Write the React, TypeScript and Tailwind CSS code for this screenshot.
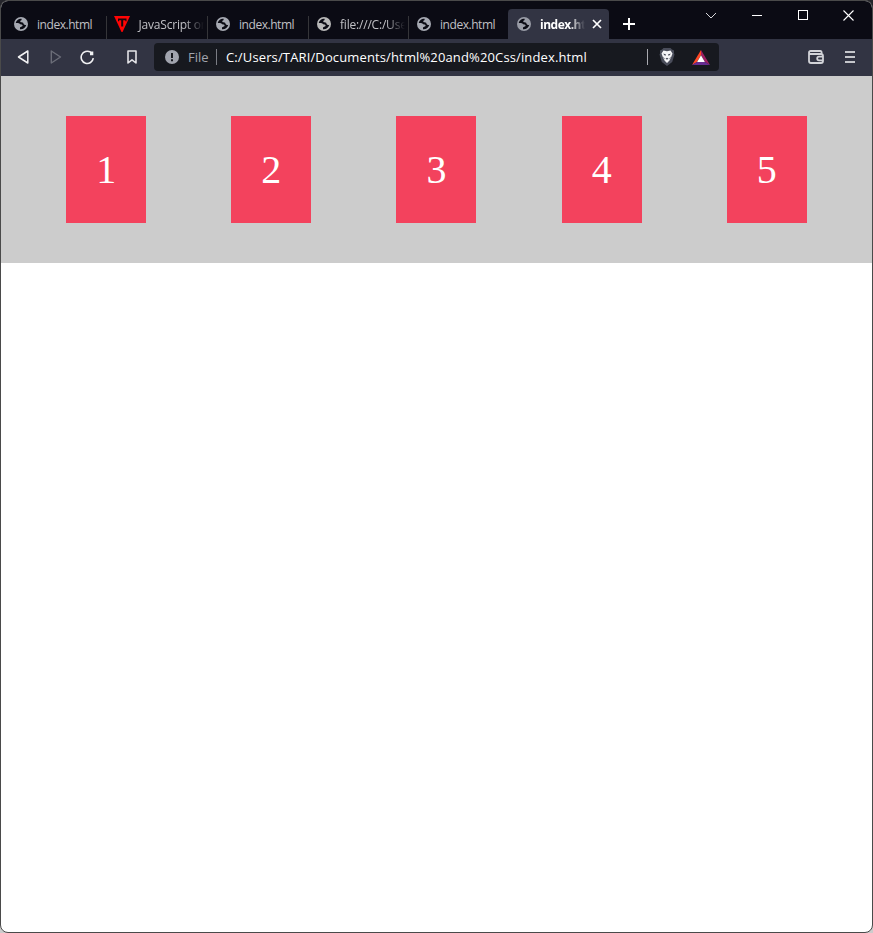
import React from "react";

const UI = "font-['Open_Sans','Noto_Sans',sans-serif]";

function Globe({ color }: { color: string }) {
  return (
    <svg className="size-[14px] shrink-0" viewBox="0 0 14 14">
      <circle cx="7" cy="7" r="7" fill={color} />
      <path d="M7.600 1.700C4.900 1.300 2.400 3 1.700 6H4c1.200 0 1.500.8 2.300 1.200.8.3 1.800 0 2.200.9.300 1-.4 1.500-1.300 1.600-.9.1-1.200.7-1.200 1.300v1.200c3.200.300 5.700-1.700 6.300-4.500-.900.500-2 .3-2.500-.500-.500-.900-.200-1.600-1.300-1.800-1.300-.200-2.300-.200-2.300-1.200 0-.900 1.400-.700 1.400-1.500Z" fill="#0b0b14" />
    </svg>
  );
}

function TLogo() {
  return (
    <svg className="h-4 w-4 shrink-0" viewBox="0 0 16 16">
      <path d="M0 0h16L8.500 16h-1Z" fill="#ff0505" />
      <path d="M4 2.500h8.500v2.800h-1.100V4.300H9.200v6.200H7.200V4.300H5.100v1H4Z" fill="#16080d" />
    </svg>
  );
}

const tabs = [
  { title: "index.html", w: "w-[101px]", globe: "#a6a9b2", track: "tracking-[-0.45px]" },
  { title: "JavaScript or", w: "w-[101px]", logo: true, fade: true, track: "tracking-[-0.2px]" },
  { title: "index.html", w: "w-[101px]", globe: "#a6a9b2", track: "tracking-[-0.45px]" },
  { title: "file:///C:/User", w: "w-[100px]", globe: "#b8b8b8", fade: true, track: "tracking-[-0.2px]" },
  { title: "index.html", w: "w-[99px]", globe: "#a6a9b2", track: "tracking-[-0.45px]" },
];

function TabStrip() {
  return (
    <div className="flex h-[38px] shrink-0 bg-[#0b0b14] pl-[5px]">
      <div className="flex h-[38px] items-end">
        {tabs.map((t, i) => (
          <div key={i} className={`flex h-[30px] items-center pl-2 ${t.w}`}>
            <div className="flex w-[20px] shrink-0">
              {t.logo ? <div className="-ml-px flex"><TLogo /></div> : <Globe color={t.globe!} />}
            </div>
            <div className={`min-w-0 flex-1 overflow-hidden whitespace-nowrap pl-[3px] pt-px text-[12px] leading-4 text-[#c0c0c5] ${t.track} ${t.fade ? "[mask-image:linear-gradient(to_right,black_72%,transparent_100%)]" : ""}`}>
              {t.logo ? <span className="ml-[0.5px]">{t.title}</span> : t.title}
            </div>
            {i < 4 && <div className="ml-[3px] mt-[7px] h-[23px] w-px bg-[#353539]" />}
          </div>
        ))}
        <div className="flex h-[30px] w-[101px] items-center rounded-t bg-[#323443] pl-[9px]">
          <Globe color="#999ca6" />
          <div className="ml-[9px] w-[45px] overflow-hidden whitespace-nowrap pt-px text-[12px] font-bold leading-4 tracking-[-0.5px] text-white [mask-image:linear-gradient(to_right,black_65%,transparent_100%)]">
            index.html
          </div>
          <svg className="ml-[7px] size-[10px]" viewBox="0 0 10 10" stroke="#fff" strokeWidth="1.700">
            <path d="M1 1l8 8M9 1L1 9" />
          </svg>
        </div>
        <svg className="mb-[9px] ml-[14px] size-3" viewBox="0 0 12 12" stroke="#fff" strokeWidth="2">
          <path d="M6 0v12M0 6h12" />
        </svg>
      </div>
      <div className="ml-auto flex h-[28px] items-center pr-[18px]">
        <svg className="mr-[35px] h-[7px] w-3" viewBox="0 0 12 7" fill="none" stroke="#d8d8dc">
          <path d="M1 1l5 5 5-5" />
        </svg>
        <div className="mr-[36px] h-px w-[10px] bg-white" />
        <div className="mr-[35px] size-[10px] border border-white" />
        <svg className="size-[11px]" viewBox="0 0 11 11" stroke="#fff" strokeWidth="1.100">
          <path d="M.500.500l10 10M10.500.500l-10 10" />
        </svg>
      </div>
    </div>
  );
}

function Toolbar() {
  return (
    <div className="flex h-[37px] shrink-0 items-center bg-[#323443] pb-px pl-4">
      <svg className="h-[14px] w-3" viewBox="0 0 12 14" fill="none" stroke="#f0f0f2" strokeWidth="1.500" strokeLinejoin="round">
        <path d="M10.800 1v12L1.500 7Z" />
      </svg>
      <svg className="ml-[21px] h-[14px] w-3" viewBox="0 0 12 14" fill="none" stroke="#6b6d78" strokeWidth="1.400" strokeLinejoin="round">
        <path d="M1.300 1v12L10.500 7Z" />
      </svg>
      <svg className="ml-[18px] size-[15px]" viewBox="0 0 15 15" fill="none" stroke="#f0f0f2" strokeWidth="1.600">
        <path d="M13.300 8.200A6.100 6.100 0 1 1 10.600 2.200" />
        <path d="M10 1.500h3.300v3.700l-3.300 0Z" fill="#f0f0f2" stroke="none" />
      </svg>
      <svg className="ml-[32px] h-[14px] w-[10px]" viewBox="0 0 10 14" fill="none" stroke="#e3e3e7" strokeWidth="1.600" strokeLinejoin="round">
        <path d="M1 1h8v12L5 9.800 1 13Z" />
      </svg>
      <div className="ml-[17px] flex h-7 w-[565px] shrink-0 items-center rounded bg-[#17191f] pl-[11px]">
        <svg className="size-[14px]" viewBox="0 0 14 14">
          <circle cx="7" cy="7" r="7" fill="#a1a4ae" />
          <path d="M6 3h2v5H6zM6 9.300h2v2H6z" fill="#17191f" />
        </svg>
        <span className="ml-[9px] w-[28px] whitespace-nowrap text-[13px] leading-4 text-[#a1a4ae]">File</span>
        <div className="h-4 w-px bg-[#7b7d84]" />
        <span className="ml-[9px] whitespace-nowrap text-[13px] leading-4 tracking-[0.135px] text-white">
          C:/Users/TARI/Documents/html%20and%20Css/index.html
        </span>
        <div className="ml-auto h-4 w-px bg-[#a9aab0]" />
        <svg className="ml-[11px] h-[18px] w-4" viewBox="0 0 16 18">
          <path d="M4.500 0h7L13 1.500l2 1v3l.5 1-2.300 7.500L8 18l-5.200-4L.500 6.500l.500-1v-3l2-1Z" fill="#4a4d5a" />
          <path d="M4.500 2.500 8 3.200l3.500-.700 2 3-1.500 4-1.500 3L8 15l-2.500-2.500-1.500-3-1.500-4Z" fill="#f5f5f7" />
          <path d="M4.300 5.500 7 6.500v1L5.200 7.200ZM11.700 5.500 9 6.500v1l1.800-.3ZM6.500 10.500l1.500-.7 1.500.7-1.500 1.200ZM3.800 8.500l1.700 1.800-.2 1.200ZM12.200 8.500l-1.700 1.800.2 1.200Z" fill="#4a4d5a" />
        </svg>
        <svg className="ml-[17px] mr-[9px] h-[15px] w-[18px]" viewBox="0 0 18 15">
          <path d="M9 0 0 15l5-3 4-7Z" fill="#ff4724" />
          <path d="M9 0l9 15-5-3-4-7Z" fill="#9e1f63" />
          <path d="M0 15h18l-5-3H5Z" fill="#662d91" />
          <path d="M9 5.200 12.900 12H5.100Z" fill="#fff" />
        </svg>
      </div>
      <svg className="ml-[89px] h-[14px] w-4" viewBox="0 0 16 14" fill="none" stroke="#d2d3d8" strokeWidth="1.800">
        <path d="M13.600 4V2.400Q13.600 1 12.300 1H2.700Q1 1 1 2.500V11q0 2 2 2h10q2 0 2-2V6q0-2-2-2H2.500Q1 4 1 2.500M15 6.700h-4a1.800 1.800 0 0 0 0 3.600h4" />
      </svg>
      <div className="ml-[21px] flex w-[10px] flex-col gap-[3px]">
        <div className="h-[2px] bg-[#c5c6cb]" />
        <div className="h-[2px] bg-[#c5c6cb]" />
        <div className="h-[2px] bg-[#c5c6cb]" />
      </div>
    </div>
  );
}

export default function App() {
  return (
    <div className="h-[933px] w-[873px] bg-[linear-gradient(#25252b_50%,#cccccc_50%)]">
      <div className={`flex h-full flex-col overflow-hidden rounded-lg border border-[#4a4a4a] bg-white ${UI}`}>
        <TabStrip />
        <Toolbar />
        <ul className="flex h-[187px] shrink-0 items-center justify-evenly bg-[#cccccc]">
          {[1, 2, 3, 4, 5].map((n) => (
            <li key={n} className="mx-5 flex h-[107px] w-20 items-center justify-center bg-[#f3425d] font-['Liberation_Serif',serif] text-[40px] leading-[46px] text-white">
              {n}
            </li>
          ))}
        </ul>
      </div>
    </div>
  );
}
